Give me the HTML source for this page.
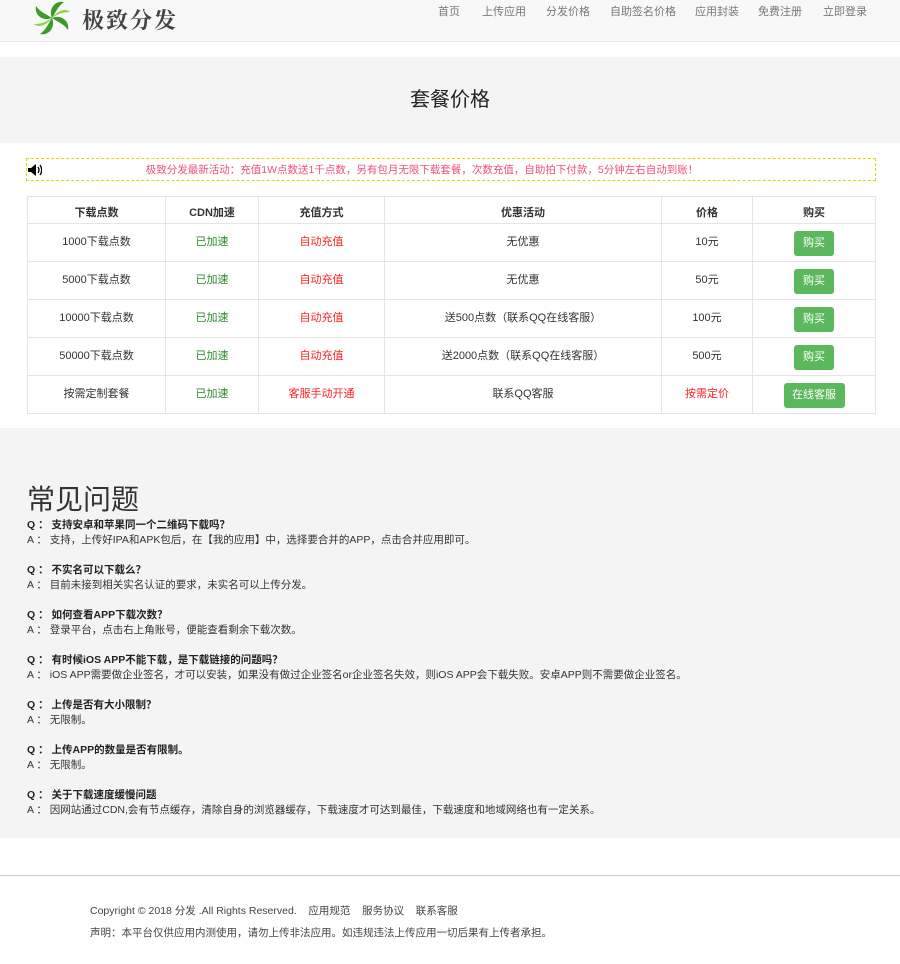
<!DOCTYPE html>
<html><head><meta charset="utf-8"><style>
*{margin:0;padding:0;box-sizing:border-box}
body{width:900px;height:964px;background:#fff;font-family:"Liberation Sans","Noto Sans CJK SC",sans-serif;font-size:11px;color:#333;position:relative;overflow:hidden}
.hd{position:absolute;left:0;top:0;width:900px;height:42px;background:#f8f8f8;border-bottom:1px solid #e7e7e7}
.logo{position:absolute;left:82px;top:4px;font-size:22px;font-weight:bold;color:#444;font-family:"Noto Serif CJK SC",serif;letter-spacing:2px}
.nav{position:absolute;top:3px;font-size:11px;color:#777}
.banner{position:absolute;top:57px;left:0;width:900px;height:86px;background:#f4f4f4;text-align:center;font-size:20px;line-height:86px;color:#222}
.notice{position:absolute;left:26px;top:158px;width:850px;height:23px;border:1px dashed #e0d800;color:#f0507a;font-size:10.5px;line-height:22px;text-align:center;padding-right:58px}
table{position:absolute;left:27px;top:196px;width:849px;border-collapse:collapse}
td,th{border:1px solid #e5e5e5;text-align:center;vertical-align:top;height:38px;padding-top:9px;font-size:11px;font-weight:normal}
th{height:27px;padding-top:7px;font-weight:bold}
.g{color:#2a8a2a}.r{color:#f22}
.btn{display:inline-block;background:#5cb85c;color:#fff;border-radius:3px;width:40px;height:25px;line-height:25px;margin-top:-2px}
.faq{position:absolute;top:428px;left:0;width:900px;height:410px;background:#f4f4f4}
.faq h2{position:absolute;left:27px;top:50px;font-size:28px;font-weight:normal;color:#333}
.qa{position:absolute;left:27px;font-size:10.5px;line-height:15px}
.qa b{color:#222}
.ft{position:absolute;top:875px;left:0;width:900px;border-top:1px solid #ccc}
.fl{position:absolute;left:90px;font-size:10.5px;color:#444}
</style></head><body>
<div class="hd">
<svg style="position:absolute;left:30px;top:0" width="44" height="38" viewBox="0 0 44 38"><g transform="translate(22,18)"><g fill="#3a9a2a"><path d="M0 0 C-4 -10 4 -18 12 -16 C6 -12 4 -6 0 0Z"/><path d="M0 0 C10 -4 18 4 16 12 C12 6 6 4 0 0Z"/><path d="M0 0 C4 10 -4 18 -12 16 C-6 12 -4 6 0 0Z"/><path d="M0 0 C-10 4 -18 -4 -16 -12 C-12 -6 -6 -4 0 0Z"/></g><g fill="#8fd04a"><path d="M0 0 C6 -8 14 -10 18 -6 C10 -6 6 -4 0 0Z"/><path d="M0 0 C-6 8 -14 10 -18 6 C-10 6 -6 4 0 0Z"/></g></g></svg>
<div class="logo">极致分发</div>
<span class="nav" style="left:438px">首页</span>
<span class="nav" style="left:482px">上传应用</span>
<span class="nav" style="left:546px">分发价格</span>
<span class="nav" style="left:610px">自助签名价格</span>
<span class="nav" style="left:695px">应用封装</span>
<span class="nav" style="left:758px">免费注册</span>
<span class="nav" style="left:823px">立即登录</span>
</div>
<div class="banner">套餐价格</div>
<div class="notice"><svg style="position:absolute;left:1px;top:5px" width="14" height="12" viewBox="0 0 14 12"><path d="M0 4h3l5-4v12l-5-4H0z" fill="#000"/><path d="M10 3q2 3 0 6M12 1q3.5 5 0 10" stroke="#000" stroke-width="1.3" fill="none"/></svg>极致分发最新活动：充值1W点数送1千点数，另有包月无限下载套餐，次数充值，自助拍下付款，5分钟左右自动到账！</div>
<table>
<tr><th style="width:138px">下载点数</th><th style="width:93px">CDN加速</th><th style="width:126px">充值方式</th><th style="width:277px">优惠活动</th><th style="width:91px">价格</th><th>购买</th></tr>
<tr><td>1000下载点数</td><td class="g">已加速</td><td class="r">自动充值</td><td>无优惠</td><td>10元</td><td><span class="btn">购买</span></td></tr>
<tr><td>5000下载点数</td><td class="g">已加速</td><td class="r">自动充值</td><td>无优惠</td><td>50元</td><td><span class="btn">购买</span></td></tr>
<tr><td>10000下载点数</td><td class="g">已加速</td><td class="r">自动充值</td><td>送500点数（联系QQ在线客服）</td><td>100元</td><td><span class="btn">购买</span></td></tr>
<tr><td>50000下载点数</td><td class="g">已加速</td><td class="r">自动充值</td><td>送2000点数（联系QQ在线客服）</td><td>500元</td><td><span class="btn">购买</span></td></tr>
<tr><td>按需定制套餐</td><td class="g">已加速</td><td class="r">客服手动开通</td><td>联系QQ客服</td><td class="r">按需定价</td><td><span class="btn" style="width:61px">在线客服</span></td></tr>
</table>
<div class="faq"><h2>常见问题</h2>
<div class="qa" style="top:90px"><b>Q ： 支持安卓和苹果同一个二维码下载吗？</b><br>A ： 支持，上传好IPA和APK包后，在【我的应用】中，选择要合并的APP，点击合并应用即可。</div>
<div class="qa" style="top:135px"><b>Q ： 不实名可以下载么？</b><br>A ： 目前未接到相关实名认证的要求，未实名可以上传分发。</div>
<div class="qa" style="top:180px"><b>Q ： 如何查看APP下载次数？</b><br>A ： 登录平台，点击右上角账号，便能查看剩余下载次数。</div>
<div class="qa" style="top:225px"><b>Q ： 有时候iOS APP不能下载，是下载链接的问题吗？</b><br>A ： iOS APP需要做企业签名，才可以安装，如果没有做过企业签名or企业签名失效，则iOS APP会下载失败。安卓APP则不需要做企业签名。</div>
<div class="qa" style="top:270px"><b>Q ： 上传是否有大小限制？</b><br>A ： 无限制。</div>
<div class="qa" style="top:315px"><b>Q ： 上传APP的数量是否有限制。</b><br>A ： 无限制。</div>
<div class="qa" style="top:360px"><b>Q ： 关于下载速度缓慢问题</b><br>A ： 因网站通过CDN,会有节点缓存，清除自身的浏览器缓存，下载速度才可达到最佳，下载速度和地域网络也有一定关系。</div>
</div>
<div class="ft"></div>
<div class="fl" style="top:903px">Copyright © 2018 分发 .All Rights Reserved. &nbsp;&nbsp; 应用规范 &nbsp;&nbsp; 服务协议 &nbsp;&nbsp; 联系客服</div>
<div class="fl" style="top:925px">声明：本平台仅供应用内测使用，请勿上传非法应用。如违规违法上传应用一切后果有上传者承担。</div>
</body></html>
